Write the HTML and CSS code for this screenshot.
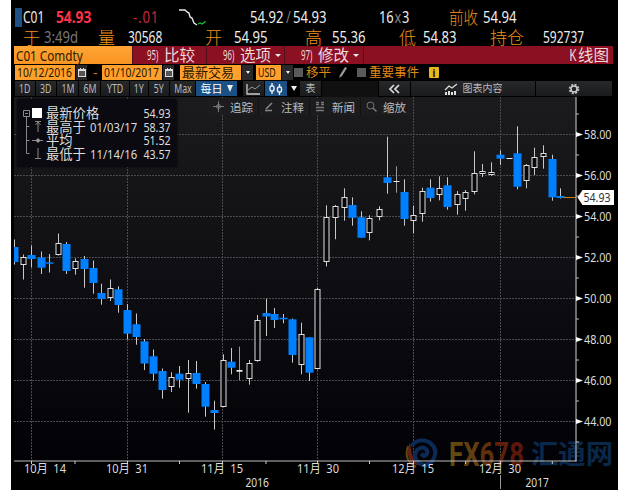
FILE: index.html
```html
<!DOCTYPE html>
<html lang="zh-CN">
<head>
    <meta charset="UTF-8">
    <meta name="viewport" content="width=device-width, initial-scale=1.0">
    <title>C01 Comdty</title>
    <link rel="stylesheet" href="styles.css">
</head>
<body>
    <div class="terminal">
        <div class="quote quote-top">
            <span class="marker"></span>
            <span class="value tight">C01</span>
            <span class="value last">54.93</span>
            <span class="value change">-.01</span>
            <svg class="spark" width="28" height="20" viewBox="0 0 28 20">
                <path d="M1 3h6l2 2 2 1 1 4 2 1 2 5 3 2" fill="none" stroke="#e8e8e8" stroke-width="1.4"/>
                <path d="M20 17l2-1 2 1 3-2v-1" fill="none" stroke="#18c030" stroke-width="1.3"/>
            </svg>
            <span class="value">54.92</span>
            <span class="value dim">/</span>
            <span class="value">54.93</span>
            <span class="value size">16<i>x</i>3</span>
            <span class="label prev">前收</span>
            <span class="value">54.94</span>
        </div>
        <div class="quote quote-bottom">
            <span class="label">于</span>
            <span class="value dim">3:49d</span>
            <span class="label">量</span>
            <span class="value tight">30568</span>
            <span class="label">开</span>
            <span class="value">54.95</span>
            <span class="label">高</span>
            <span class="value">55.36</span>
            <span class="label">低</span>
            <span class="value">54.83</span>
            <span class="label">持仓</span>
            <span class="value tight">592737</span>
        </div>

        <div class="menu">
            <div class="ticker"><span>C01 Comdty</span></div>
            <div class="menu-item"><b>95)</b><span>比较</span></div>
            <div class="menu-item"><b>96)</b><span>选项</span><i class="arrow"></i></div>
            <div class="menu-item"><b>97)</b><span>修改</span><i class="arrow"></i></div>
            <div class="menu-title"><b>K</b>线图</div>
        </div>

        <div class="filters">
            <div class="field"><span class="date">10/12/2016</span></div>
            <div class="btn"><svg width="8" height="9"><path d="M0 1h8v8H0zM2 0h1v1H2zM5 0h1v1H5z" fill="#ddd"/><path d="M1 3h6v5H1z" fill="#555"/></svg></div>
            <div class="dash">-</div>
            <div class="field"><span class="date">01/10/2017</span></div>
            <div class="btn"><svg width="8" height="9"><path d="M0 1h8v8H0zM2 0h1v1H2zM5 0h1v1H5z" fill="#ddd"/><path d="M1 3h6v5H1z" fill="#555"/></svg></div>
            <div class="field field-cjk">最新交易</div>
            <div class="btn"><i class="arrow small"></i></div>
            <div class="field"><span class="cur">USD</span></div>
            <div class="btn"><i class="arrow small"></i></div>
            <div class="check"></div>
            <div class="check-label">移平</div>
            <svg class="pencil" width="9" height="12"><path d="M1 11l1-3 5-8 2 1-5 8z" fill="#999"/></svg>
            <div class="check"></div>
            <div class="check-label">重要事件</div>
            <div class="info">i</div>
        </div>

        <div class="periods">
            <div class="tab"><span>1D</span></div>
            <div class="tab"><span>3D</span></div>
            <div class="tab"><span>1M</span></div>
            <div class="tab"><span>6M</span></div>
            <div class="tab"><span>YTD</span></div>
            <div class="tab"><span>1Y</span></div>
            <div class="tab"><span>5Y</span></div>
            <div class="tab"><span>Max</span></div>
            <div class="tab active">每日<i class="arrow big"></i></div>
            <div></div>
            <div class="tab"><svg width="15" height="12"><path d="M1 1v10h13" fill="none" stroke="#ccc" stroke-width="1.3"/><path d="M2 7l4-3 3 2 5-4" fill="none" stroke="#999"/></svg></div>
            <div class="tab active"><svg width="16" height="12" fill="none" stroke="#f0f0f0" stroke-width="1.4"><path d="M4 0v3M4 8v3M11.5 1v3M11.5 9v3"/><rect x="2" y="3" width="4" height="5" rx="1.5"/><rect x="9.5" y="4" width="4" height="5" rx="1.5"/></svg></div>
            <div class="tab plain"><i class="arrow big"></i></div>
            <div class="tab">表</div>
            <div class="gap"></div>
            <div class="tab"><svg width="13" height="10"><path d="M6 1L2 5l4 4M11 1L7 5l4 4" fill="none" stroke="#ddd" stroke-width="1.7"/></svg></div>
            <div class="tab content"><svg width="14" height="12"><path d="M1 7l4-4 3 2 5-4" fill="none" stroke="#ddd" stroke-width="1.2"/><path d="M1 9h2v3H1zM4 8h2v4H4zM7 9h2v3H7zM10 8h2v4h-2z" fill="#ddd"/></svg>图表内容</div>
            <div class="tab"><svg width="12" height="12"><circle cx="6" cy="6" r="4.3" fill="none" stroke="#bbb" stroke-width="2" stroke-dasharray="2 1.38"/><circle cx="6" cy="6" r="3" fill="none" stroke="#ccc" stroke-width="1.5"/></svg></div>
        </div>

        <div class="chart-area">
            <svg id="chart" class="chart" width="607" height="393" viewBox="11 97 607 393">
                <defs>
                    <linearGradient id="plotBg" x1="0" y1="0" x2="0" y2="1">
                        <stop offset="0" stop-color="#1b1b1d"/>
                        <stop offset="0.45" stop-color="#101014"/>
                        <stop offset="1" stop-color="#010106"/>
                    </linearGradient>
                    <clipPath id="plotClip"><rect x="14" y="97" width="562" height="364"/></clipPath>
                </defs>
                <rect x="14" y="97" width="562" height="364" fill="url(#plotBg)"/>
                <g id="grid"></g>
                <g id="watermark">
                    <g fill="none">
                        <path d="M410 443q-6 12 3 20q8 6 18 1q-16 1-19-10q-1-6-2-11" fill="#642012"/>
                        <path d="M408 446q-5 14 8 21" stroke="#5c4610" stroke-width="2"/>
                        <path d="M411 446q8-9 18-4q10 7 4 18q-6 8-14 3q-7-6-2-13q6-5 10 0q1 5-3 6l-3-2" stroke="#0b2a56" stroke-width="4"/>
                    </g>
                    <text class="mark" x="449" y="466" textLength="75" lengthAdjust="spacingAndGlyphs"><tspan fill="#604a12">F</tspan><tspan fill="#603d12">X</tspan><tspan fill="#602f0c">6</tspan><tspan fill="#601f0a">7</tspan><tspan fill="#5c180b">8</tspan></text>
                    <text class="mark mark-cjk" x="531" y="464" textLength="82" lengthAdjust="spacingAndGlyphs">汇通网</text>
                </g>
                <g id="candles" clip-path="url(#plotClip)"></g>
                <g id="axes"></g>
            </svg>

            <div class="legend">
                <svg class="legend-tree" width="38" height="68" fill="none" stroke="#888">
                    <path d="M6.5 12.5h6v6h-6zM8 15.5h3M9.5 19v36.500h3M9.5 28.5h3M9.5 42.5h3"/>
                    <rect x="15" y="10" width="10" height="10" fill="#fff" stroke="none"/>
                    <path d="M18 23.5h6M21 24v10M18.5 27l2.5-3 2.5 3M15 42.5h11M21 50v10M18 60.5h6"/>
                    <path d="M21 40l2.5 2.5L21 45l-2.5-2.5z" fill="#999" stroke="none"/>
                </svg>
                <div class="legend-rows">
                    <div class="legend-row"><span>最新价格</span><em>54.93</em></div>
                    <div class="legend-row"><span>最高于</span><u>01/03/17</u><em>58.37</em></div>
                    <div class="legend-row"><span>平均</span><em>51.52</em></div>
                    <div class="legend-row"><span>最低于</span><u>11/14/16</u><em>43.57</em></div>
                </div>
            </div>

            <div class="tools">
                <div class="tool"><svg width="11" height="11" fill="none" stroke="#777"><path d="M5.5 0v11M0 5.5h11"/><circle cx="5.5" cy="5.5" r="2"/></svg>追踪</div>
                <div class="tool"><svg width="11" height="11" fill="none" stroke="#888"><path d="M2 8l6-6M1 9.5h7" stroke-width="1.5"/></svg>注释</div>
                <div class="tool"><svg width="11" height="11" fill="none" stroke="#777"><path d="M1 1.5h3M1 3.5h3M6 1.5h3M6 3.5h3M1 6.5h8M1 9.5h8" stroke-width="1.3"/></svg>新闻</div>
                <div class="tool"><svg width="11" height="11" fill="none" stroke="#777"><circle cx="4.5" cy="4.5" r="3.5"/><path d="M7 7l3.5 3.5" stroke-width="1.5"/></svg>缩放</div>
            </div>
        </div>
    </div>

    <script src="chart.js"></script>
</body>
</html>
```

FILE: styles.css
```css
body {
    margin: 0;
    background: #fff;
    font-family: "Noto Sans", "Noto Sans CJK SC", sans-serif;
    overflow: hidden;
}
i, em, u {
    font-style: normal;
    text-decoration: none;
}
.terminal {
    margin-left: 11px;
    width: 607px;
    height: 490px;
    background: #000;
    overflow: hidden;
}

/* quote header */
.quote {
    display: grid;
    align-items: center;
    white-space: nowrap;
    font-size: 16px;
    line-height: 20px;
}
.quote-top {
    padding: 7px 0 0 4px;
    height: 20px;
    grid-template-columns: 8px 33px 77px 45px 72px 36px 7px 86px 70px 34px 60px;
}
.quote-bottom {
    height: 19px;
    padding-left: 12px;
    grid-template-columns: 21px 54px 30px 77px 29px 71px 27px 67px 24px 67px 53px 60px;
}
.value {
    color: #eee;
    transform: scaleX(0.82);
    transform-origin: left;
}
.tight {
    transform: scaleX(0.75);
}
.size {
    transform: scaleX(0.8);
}
.value i {
    color: #888;
    margin: 0 1px;
}
.last {
    color: #ff3048;
    font-weight: bold;
    transform: scaleX(0.86);
}
.change {
    color: #c8283c;
    letter-spacing: 1px;
}
.dim {
    color: #777;
}
.label {
    color: #f09018;
    font-family: "Noto Sans CJK SC", sans-serif;
    font-size: 17px;
    font-weight: 300;
}
.prev {
    transform: scaleX(0.86);
    transform-origin: left;
}
.marker {
    width: 7px;
    height: 19px;
    background: #1d5288;
}

/* red menu bar */
.menu {
    display: grid;
    grid-template-columns: 118px 74px 78px 79px 1fr;
    height: 18px;
    margin: 0 5px 0 3px;
    background: #8a1022;
    color: #eed8dc;
    line-height: 18px;
    font-size: 15.5px;
}
.ticker {
    background: linear-gradient(#ffa433, #f89422);
    color: #2a1a00;
    font-size: 15px;
    padding-left: 2px;
    white-space: nowrap;
}
.ticker span {
    display: inline-block;
    transform: scaleX(0.78);
    transform-origin: left;
}
.menu-item {
    display: flex;
    align-items: center;
    border-left: 1px solid #54101a;
    padding-left: 16px;
    white-space: nowrap;
}
.menu-item:nth-child(2) {
    padding-left: 14px;
}
.menu-item b, .menu-title b {
    font-weight: normal;
}
.menu-item b {
    width: 17px;
    font-size: 14px;
    transform: scaleX(0.56);
    transform-origin: left;
}
.menu-item span {
    width: 31px;
}
.menu-title {
    border-left: 1px solid #54101a;
    text-align: right;
    padding-right: 4px;
}
.menu-title b {
    display: inline-block;
    transform: scaleX(0.75);
}
.arrow {
    border: 3px solid transparent;
    border-top-color: #eee;
    border-bottom: 0;
    margin-left: 4px;
}
.arrow.small {
    border-width: 3px 2px 0;
    margin: 0;
}
.arrow.big {
    border-width: 7px 3.5px 0;
    margin-left: 4px;
}

/* date range row */
.filters {
    display: grid;
    grid-template-columns: 60px 13px 14px 60px 18px 61px 15px 25px 13px 12px 32px 19px 12px 60px 10px;
    align-items: center;
    height: 17px;
    padding-left: 4px;
    font-size: 12px;
    line-height: 15px;
    white-space: nowrap;
}
.field {
    height: 15px;
    background: #ffa02c;
    color: #241600;
    padding-left: 2px;
}
.field span {
    display: inline-block;
    transform: scaleX(0.86);
    transform-origin: left;
}
.field .cur {
    transform: scaleX(0.7);
    font-size: 12.5px;
}
.field-cjk {
    font-size: 13px;
}
.btn {
    width: 11px;
    height: 15px;
    display: flex;
    align-items: center;
    justify-content: center;
    background: #29292b;
    margin-left: 1px;
}
.dash {
    color: #c07818;
    padding-left: 5px;
    font-size: 14px;
}
.check {
    width: 9px;
    height: 9px;
    background: #5a5a5a;
}
.check-label {
    color: #e08814;
    font-size: 12.5px;
}
.info {
    background: #e8b820;
    color: #302000;
    height: 11px;
    line-height: 11px;
    border-radius: 1px;
    text-align: center;
    font-weight: bold;
    font-size: 11px;
}

/* period tabs */
.periods {
    display: grid;
    grid-template-columns: 21px 21px 22px 22px 29px 19px 21px 26px 42px 5px 22px 23px 12px 22px 57px 32px 125px 77px;
    height: 16px;
    padding-left: 4px;
    font-size: 12px;
    line-height: 15px;
    color: #bbb;
    white-space: nowrap;
}
.tab {
    display: flex;
    align-items: center;
    justify-content: center;
    height: 15px;
    margin-right: 1px;
    background: linear-gradient(#27282a, #1a1b1d);
}
.tab span {
    transform: scaleX(0.73);
}
.tab.active {
    background: #1b5085;
    color: #fff;
    font-size: 11px;
}
.tab.plain {
    background: none;
}
.plain .arrow {
    margin: 0;
    border-top-width: 5px;
}
.gap {
    background: #101011;
    margin-right: 1px;
}
.tab:nth-child(14) {
    font-size: 10px;
}
.tab.content {
    font-size: 10px;
}
.content svg {
    margin-right: 5px;
}

/* chart */
.chart-area {
    position: relative;
}
.chart {
    display: block;
}
.chart text {
    font-family: "Noto Sans", "Noto Sans CJK SC", sans-serif;
    font-size: 12px;
    fill: #ddd;
}
.chart .date-label {
    word-spacing: 3px;
}
.chart .tag {
    fill: #333;
}
.chart .mark {
    font-family: "Roboto", sans-serif;
    font-size: 34px;
    font-weight: 700;
}
.chart .mark tspan {
    stroke: none;
}
.chart .mark-cjk {
    font-family: "Noto Sans CJK SC", sans-serif;
    font-size: 27px;
    fill: #0a284a;
}
.legend {
    position: absolute;
    left: 6px;
    top: 2px;
    width: 160px;
    height: 68px;
    background: #0a0a10;
    border-radius: 3px;
    box-shadow: 0 0 2px #000;
}
.legend-tree {
    position: absolute;
    left: 0;
    top: -1px;
}
.legend-rows {
    padding: 8px 6px 0 29px;
    font-size: 13.3px;
    color: #ddd;
}
.legend-row {
    display: flex;
    height: 13.7px;
    line-height: 13.7px;
    white-space: nowrap;
}
.legend-row u {
    width: 50px;
    margin-left: 4px;
    font-size: 12px;
    transform: scaleX(0.94);
    transform-origin: left;
}
.legend-row em {
    margin-left: auto;
    font-size: 12px;
    transform: scaleX(0.89);
    transform-origin: right;
}
.tools {
    position: absolute;
    left: 197px;
    top: 1px;
    display: flex;
    gap: 1px;
    background: #111;
}
.tool {
    display: flex;
    align-items: center;
    width: 50px;
    height: 17px;
    gap: 6px;
    justify-content: center;
    background: #1c1c1e;
    color: #bbb;
    font-size: 11.5px;
}
```

FILE: chart.js
```js
const NS = "http://www.w3.org/2000/svg";

// x, high, body top, body bottom, low, type (d = down, u = up, n = no body)
const candles = [
    [14.5, 239.5, 247, 262, 264.5, "d"], [23.3, 254.5, 257, 265.3, 279.5, "u"],
    [31.7, 245.5, 255, 259, 267.5, "d"], [41, 251.5, 257.5, 267.7, 274, "d"],
    [49.5, 254, 262.3, 263.7, 272.5, "d"], [58, 233.5, 243.5, 255.5, 255.5, "u"],
    [66.7, 242, 244, 271, 274, "d"], [75, 258.5, 261.5, 269.5, 274.7, "u"],
    [84.3, 256, 259, 269, 287.7, "d"], [93, 260.5, 268, 283, 293.7, "d"],
    [101.5, 283.7, 293, 299, 304.7, "d"], [110, 279.5, 288.8, 298, 301, "u"],
    [118.3, 286.3, 289.3, 305, 312.7, "d"], [127.5, 304, 310, 333.7, 339.5, "d"],
    [136, 313.5, 324.3, 337, 344.7, "d"], [144.5, 339, 341.3, 363.5, 370, "d"],
    [153, 349.5, 356.3, 373.7, 380.5, "d"], [162.5, 368.5, 371, 390, 398.7, "d"],
    [171, 372.3, 377.5, 387, 392, "u"], [179.5, 366, 373.7, 379.7, 387.7, "d"],
    [188, 360, 373, 379.5, 412.7, "u"], [196.3, 361, 373, 384, 388.7, "d"],
    [205.6, 382, 384, 406.7, 416.7, "d"], [214.3, 400.7, 410, 413, 429.7, "d"],
    [223, 354.3, 360, 407.3, 407.3, "u"], [231.3, 348, 361.7, 367.7, 374.3, "d"],
    [239.7, 346.7, 370, 371.7, 380.3, "n"], [249, 360, 363, 379.3, 384.7, "u"],
    [257.5, 315, 320.3, 361.7, 361.7, "u"], [266, 298.7, 313, 316.5, 336, "d"],
    [274.3, 308, 314, 320, 328, "d"], [283, 314, 317.7, 319.3, 323.3, "d"],
    [292.3, 318.5, 319.3, 355, 362.7, "d"], [301, 322.7, 334, 365.7, 374.3, "u"],
    [309.5, 337.3, 337.3, 372.7, 381, "d"], [317.8, 288, 289, 369.5, 369.5, "u"],
    [326.3, 205.3, 217.5, 262.8, 266.5, "u"], [335.6, 205, 206.5, 218.7, 239.3, "u"],
    [344.3, 188.3, 197.3, 208.5, 220.7, "u"], [352.7, 197.3, 205, 217.8, 225.7, "d"],
    [361.2, 211.3, 217.3, 237.7, 237.7, "d"], [369.5, 215.3, 218.5, 233.8, 240.3, "u"],
    [379, 206.3, 209.3, 217.3, 220.3, "u"], [387.5, 136.7, 177.3, 183, 193.7, "d"],
    [396, 166.3, 181, 182, 192.7, "n"], [404.5, 179.3, 192, 219, 225.7, "d"],
    [413, 205.7, 215.7, 221.3, 233.3, "u"], [422.3, 187.7, 191.3, 214.5, 221.7, "u"],
    [430.8, 179.3, 187.7, 198, 201.7, "d"], [439.3, 176.3, 188.7, 195.7, 200.3, "u"],
    [447.8, 177.3, 185.3, 207, 209.7, "d"], [457, 191, 194.5, 205.3, 214.7, "u"],
    [465.5, 190, 192.3, 199.3, 210.7, "u"], [474, 151.3, 173.3, 192.7, 194.3, "u"],
    [482.5, 164, 171, 174.3, 177, "u"], [491, 162.3, 172.3, 175.7, 175.7, "u"],
    [500.5, 150.3, 154.7, 158.7, 165, "d"], [509, 158, 158, 159, 159, "n"],
    [517.3, 126.3, 153.3, 186.7, 189.3, "d"], [526, 164, 165.5, 181.5, 188.3, "u"],
    [534.4, 147.7, 157.3, 168.7, 175, "u"], [543.5, 145.3, 153.3, 157.7, 168.7, "u"],
    [552.3, 154.7, 159, 197.3, 200.7, "d"], [560.5, 188.3, 196, 198, 198.5, "d"]
];

const prices = [[58, 134.5], [56, 175.5], [54, 216.5], [52, 257.5], [50, 298.5], [48, 339.5], [46, 380.5], [44, 421.5]];
const dates = [
    ["10月 14", 31.5, 24, 42], ["10月 31", 127.5, 106, 42], ["11月 15", 222.5, 201, 42],
    ["11月 30", 317.5, 297, 42], ["12月 15", 413.5, 392, 42], ["12月 30", 500.5, 479, 42]
];

function add(parent, tag, attrs, text) {
    const el = document.createElementNS(NS, tag);
    for (const key in attrs) el.setAttribute(key, attrs[key]);
    if (text) el.textContent = text;
    document.getElementById(parent).appendChild(el);
}

function line(parent, x1, y1, x2, y2, stroke, width, dash) {
    add(parent, "line", { x1, y1, x2, y2, stroke, "stroke-width": width || 1, "stroke-dasharray": dash || "none" });
}

function label(x, y, length, text, cls) {
    add("axes", "text", { x, y, textLength: length, lengthAdjust: "spacingAndGlyphs", class: cls || "" }, text);
}

prices.forEach(([, y]) => line("grid", 14, y, 576, y, "#4c4c50", 1, "2 1"));
dates.forEach(([, x]) => line("grid", x, 97, x, 461, "#4c4c50", 1, "2 1"));

candles.forEach(([x, high, top, bottom, low, type]) => {
    const cx = Math.floor(x) + 0.5;
    if (type === "d") {
        line("candles", cx, high, cx, low, "#c8c8c8");
        add("candles", "rect", { x: cx - 4, y: top, width: 8, height: bottom - top, fill: "#0080ff" });
    } else if (type === "u") {
        const y1 = Math.floor(top) + 0.5;
        const y2 = Math.floor(bottom) - 0.5;
        line("candles", cx, high, cx, y1, "#c8c8c8");
        line("candles", cx, y2, cx, low, "#c8c8c8");
        add("candles", "rect", { x: cx - 2.5, y: y1, width: 5, height: Math.max(y2 - y1, 2), fill: "#08080c", stroke: "#ddd" });
    } else {
        line("candles", cx, high, cx, low, "#999");
        add("candles", "rect", { x: cx - 3, y: top, width: 6, height: bottom - top, fill: "#eee" });
    }
});

line("axes", 564, 197.5, 576, 197.5, "#c87c10");
line("axes", 576, 97, 576, 461.5, "#999", 1.4);
line("axes", 14, 461, 576.5, 461, "#bbb", 1.2);
line("axes", 500.5, 475, 500.5, 489, "#9a9a9a");

prices.forEach(([price, y]) => {
    add("axes", "path", { d: `M576 ${y - 2.5}l7 2.5l-7 2.5z`, fill: "#fff" });
    label(584, y + 4.5, 27.5, price.toFixed(2));
    line("axes", 576, y - 20.5, 579, y - 20.5, "#bbb");
});
line("axes", 576, 442, 579, 442, "#bbb");

dates.forEach(([text, x, tx, length]) => {
    line("axes", x, 461, x, 464, "#ccc");
    label(tx, 473, length, text, "date-label");
});
[75, 179.5, 266, 369.5, 465.5, 552.3].forEach(x => line("axes", x, 461, x, 464, "#ccc"));
label(245.5, 486.5, 23.5, "2016");
label(525.5, 486.5, 23.5, "2017");

add("axes", "path", { d: "M577.5 197.5l5-7.5h31.5v15h-31.5z", fill: "#fff" });
label(583.5, 202, 27, "54.93", "tag");
```
